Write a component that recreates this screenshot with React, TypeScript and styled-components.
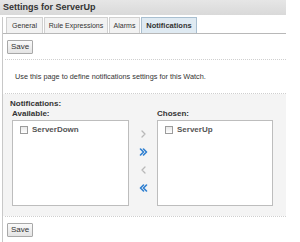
import styled, { createGlobalStyle } from "styled-components";

const Global = createGlobalStyle`
  body {
    margin: 0;
    background: #fff;
    font-family: "Liberation Sans", Arial, sans-serif;
    color: #222;
  }
`;

const TABS = [
  { label: "General", width: 37 },
  { label: "Rule Expressions", width: 64 },
  { label: "Alarms", width: 31 },
  { label: "Notifications", width: 56, active: true },
];

const Page = styled.div`
  width: 286px;
`;

const TitleBar = styled.div`
  height: 15px;
  line-height: 14px;
  padding-left: 3px;
  background: linear-gradient(#e6e6e6, #d9d9d9);
  font-size: 9px;
  font-weight: bold;
  color: #333;
`;

const Body = styled.div`
  margin: 2px 0 0 2px;
  border-left: 1px solid #c8c8c8;
  height: 225px;
`;

const TabStrip = styled.div`
  display: flex;
  gap: 1px;
  padding-left: 3px;
  border-bottom: 1px solid #b8b8b8;
  height: 16px;
`;

const Tab = styled.div<{ $active?: boolean; $w: number }>`
  width: ${(p) => p.$w}px;
  height: 16px;
  box-sizing: border-box;
  line-height: 15px;
  text-align: center;
  white-space: nowrap;
  font-size: ${(p) => (p.$active ? 7.5 : 7)}px;
  border: 1px solid ${(p) => (p.$active ? "#a9bfd0" : "#d0d0d0")};
  border-bottom: none;
  background: ${(p) => (p.$active ? "#dfeaf2" : "#f2f2f2")};
  font-weight: ${(p) => (p.$active ? "bold" : "normal")};
  color: #333;
`;

const ButtonRow = styled.div<{ $top: number }>`
  padding: ${(p) => p.$top}px 0 0 4px;
`;

const Button = styled.div`
  width: 26px;
  height: 14px;
  box-sizing: border-box;
  border: 1px solid #a8a8a8;
  border-radius: 1px;
  background: linear-gradient(#fafafa, #e4e4e4);
  font-size: 8px;
  line-height: 12px;
  text-align: center;
  color: #333;
`;

const Rule = styled.div<{ $top: number }>`
  margin: ${(p) => p.$top}px 0 0 2px;
  border-top: 1px dotted #cfcfcf;
`;

const Intro = styled.div`
  padding: 12px 0 0 12px;
  height: 21px;
  font-size: 7.3px;
  color: #333;
`;

const Panel = styled.div`
  background: #f4f4f4;
  padding-top: 5px;
  height: 122px;
  box-sizing: border-box;
`;

const Heading = styled.div<{ $indent?: number }>`
  font-size: 8px;
  font-weight: bold;
  color: #333;
  line-height: 10px;
  padding-left: ${(p) => p.$indent ?? 0}px;
`;

const Shuttle = styled.div`
  display: grid;
  grid-template-columns: 117px 28px 116px;
  padding-left: 9px;
`;

const Column = styled.div`
  display: flex;
  flex-direction: column;
`;

const ListBox = styled.div`
  margin-top: 1px;
  height: 86px;
  box-sizing: border-box;
  border: 1px solid #bdbdbd;
  background: #fff;
  padding: 4px 0 0 7px;
`;

const Item = styled.div`
  display: flex;
  align-items: center;
  gap: 4px;
  font-size: 8px;
  font-weight: bold;
  color: #555;
`;

const Check = styled.span`
  width: 6px;
  height: 6px;
  border: 1px solid #9c9c9c;
  background: linear-gradient(#e8e8e8, #fff);
`;

const Arrows = styled.div`
  display: flex;
  flex-direction: column;
  align-items: center;
  padding-top: 21px;
  gap: 10px;
`;

function Chevron({ dir, double, color }: { dir: "r" | "l"; double?: boolean; color: string }) {
  const one = dir === "r" ? "M1 1 L4 4 L1 7" : "M4 1 L1 4 L4 7";
  return (
    <svg width="9" height="8" viewBox="0 0 9 8">
      <g fill="none" stroke={color} strokeWidth={double ? 1.6 : 1.3} strokeLinecap="round" strokeLinejoin="round">
        {double ? (
          <>
            <path d={one} transform="translate(0.5 0)" />
            <path d={one} transform="translate(3.5 0)" />
          </>
        ) : (
          <path d={one} transform="translate(2 0)" />
        )}
      </g>
    </svg>
  );
}

export default function App() {
  return (
    <Page>
      <Global />
      <TitleBar>Settings for ServerUp</TitleBar>
      <Body>
        <TabStrip>
          {TABS.map((t) => (
            <Tab key={t.label} $w={t.width} $active={t.active}>
              {t.label}
            </Tab>
          ))}
        </TabStrip>
        <ButtonRow $top={6}>
          <Button>Save</Button>
        </ButtonRow>
        <Rule $top={5} />
        <Intro>Use this page to define notifications settings for this Watch.</Intro>
        <Rule $top={0} />
        <Panel>
          <Heading $indent={7}>Notifications:</Heading>
          <Shuttle>
            <Column>
              <Heading>Available:</Heading>
              <ListBox>
                <Item>
                  <Check />
                  ServerDown
                </Item>
              </ListBox>
            </Column>
            <Arrows>
              <Chevron dir="r" color="#b8b8b8" />
              <Chevron dir="r" double color="#2f7fd0" />
              <Chevron dir="l" color="#b8b8b8" />
              <Chevron dir="l" double color="#2f7fd0" />
            </Arrows>
            <Column>
              <Heading>Chosen:</Heading>
              <ListBox>
                <Item>
                  <Check />
                  ServerUp
                </Item>
              </ListBox>
            </Column>
          </Shuttle>
        </Panel>
        <Rule $top={0} />
        <ButtonRow $top={6}>
          <Button>Save</Button>
        </ButtonRow>
      </Body>
    </Page>
  );
}
